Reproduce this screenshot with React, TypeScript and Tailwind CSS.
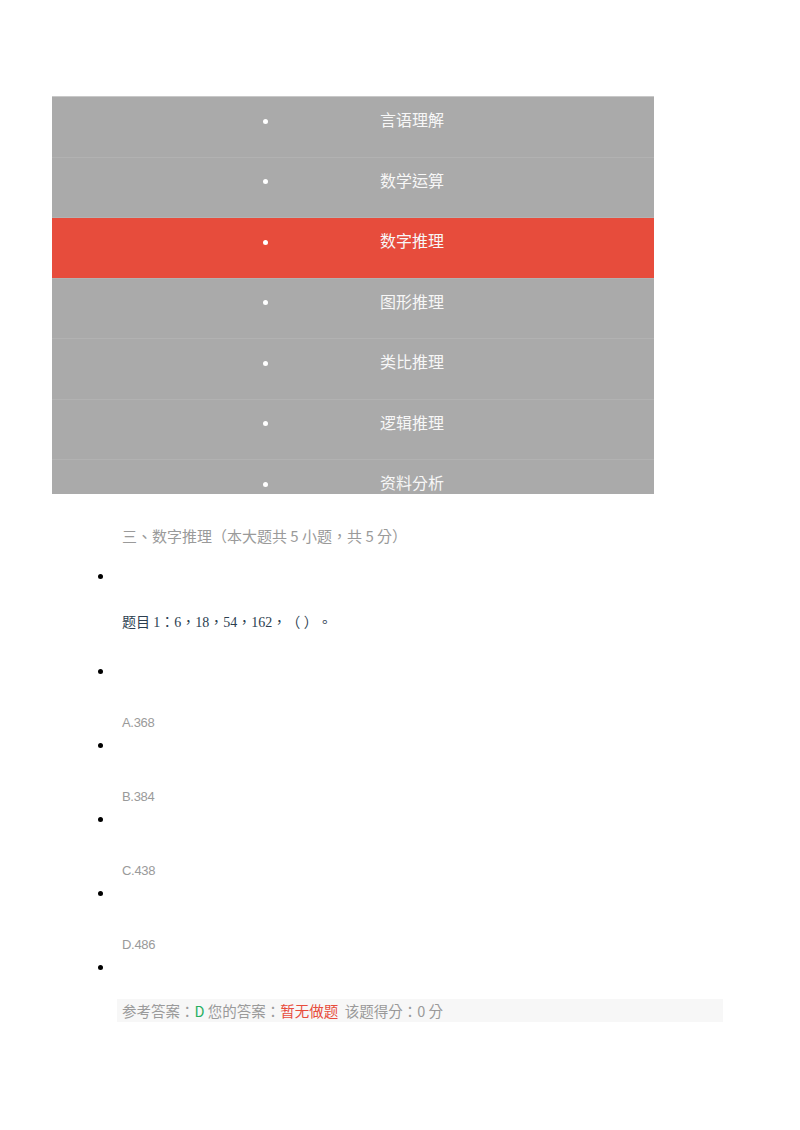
import React from 'react';

const menu = ['言语理解', '数学运算', '数字推理', '图形推理', '类比推理', '逻辑推理', '资料分析'];
const options = ['A.368', 'B.384', 'C.438', 'D.486'];

// TC face: centred full-width punctuation, as in the shot
const cjk = "font-['Noto_Sans_CJK_TC','Noto_Sans',sans-serif]";

const Dot: React.FC<{ light?: boolean }> = ({ light }) => (
  <span className={`block w-[5px] h-[5px] rounded-full ${light ? 'bg-white' : 'bg-black'}`} />
);

const BulletRow: React.FC<{ className?: string }> = ({ className = '' }) => (
  <div className={`h-[20px] flex items-center pl-[98px] ${className}`}>
    <Dot />
  </div>
);

const App: React.FC = () => {
  const active = 2;

  return (
    <div className={`w-[800px] min-h-[1130px] bg-white pt-[96px] [text-spacing-trim:space-all] ${cjk}`}>
      <div className="ml-[52px] w-[602px] h-[398px] overflow-hidden bg-[#aaaaaa] border-t border-[#c8c8c8]">
        {menu.map((item, i) => (
          <div
            key={item}
            className={`h-[60.5px] flex items-start pt-[10px] border-b border-[#b2b2b2] ${i === active ? 'bg-[#e74c3c]' : 'bg-[#aaaaaa]'}`}
          >
            <div className="h-[28px] flex items-center pl-[211px] w-[328px]">
              <Dot light />
            </div>
            <span className="text-[16px] leading-[24px] text-[#f7f7f7]">{item}</span>
          </div>
        ))}
      </div>

      <div className="mt-[30px] pl-[122px] text-[15px] leading-[24px] text-[#9a9a9a]">
        三、数字推理（本大题共 5 小题，共 5 分）
      </div>

      <BulletRow className="mt-[18px]" />
      <div className="mt-[25px] pl-[122px] text-[14px] leading-[20px] text-[#2c3e50]">
        题目 <span className="font-['Liberation_Serif','Noto_Sans_CJK_TC',serif]">1：6，18，54，162，（ ）。</span>
      </div>

      {options.map((opt, i) => (
        <div key={opt}>
          <BulletRow className={i === 0 ? 'mt-[28px]' : 'mt-[2px]'} />
          <div className="mt-[32px] pl-[122px] text-[13px] leading-[20px] text-[#9a9a9a] font-['Liberation_Sans',sans-serif] tracking-[-0.3px]">
            {opt}
          </div>
        </div>
      ))}
      <BulletRow className="mt-[2px]" />

      <div className="mt-[22px] ml-[117px] w-[606px] h-[23px] bg-[#f7f7f7] pl-[5px] flex items-center text-[14.5px] text-[#9a9a9a] whitespace-pre">
        <span>参考答案：</span>
        <span className="text-[#27ae60]">D</span>
        <span> 您的答案：</span>
        <span className="text-[#e74c3c]">暂无做题</span>
        <span>  该题得分：0 分</span>
      </div>
    </div>
  );
};

export default App;
